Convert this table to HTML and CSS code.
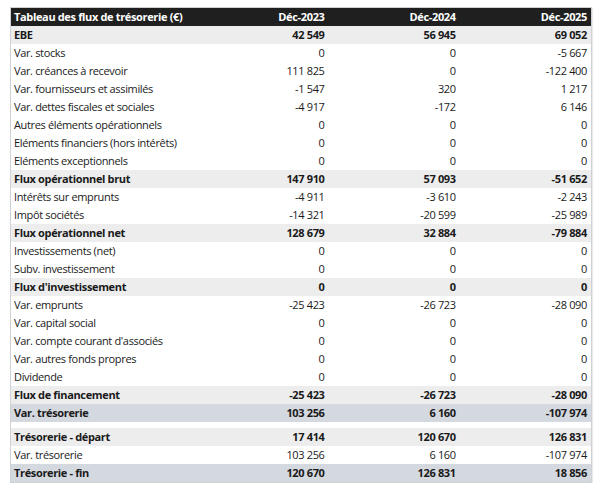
FILE: index.html
```html
<!DOCTYPE html>
<html lang="fr">
<head>
<meta charset="utf-8">
<link rel="stylesheet" href="styles.css">
</head>
<body>
<div class="frame">
<table class="cf">
<colgroup><col class="c-label"><col class="c-num"><col class="c-num"><col class="c-num"></colgroup>
<thead>
<tr class="head"><th>Tableau des flux de trésorerie (€)</th><th>Déc-2023</th><th>Déc-2024</th><th>Déc-2025</th></tr>
</thead>
<tbody>
<tr class="total"><td>EBE</td><td>42 549</td><td>56 945</td><td>69 052</td></tr>
<tr><td>Var. stocks</td><td>0</td><td>0</td><td>-5 667</td></tr>
<tr><td>Var. créances à recevoir</td><td>111 825</td><td>0</td><td>-122 400</td></tr>
<tr><td>Var. fournisseurs et assimilés</td><td>-1 547</td><td>320</td><td>1 217</td></tr>
<tr><td>Var. dettes fiscales et sociales</td><td>-4 917</td><td>-172</td><td>6 146</td></tr>
<tr><td>Autres éléments opérationnels</td><td>0</td><td>0</td><td>0</td></tr>
<tr><td>Eléments financiers (hors intérêts)</td><td>0</td><td>0</td><td>0</td></tr>
<tr><td>Eléments exceptionnels</td><td>0</td><td>0</td><td>0</td></tr>
<tr class="total"><td>Flux opérationnel brut</td><td>147 910</td><td>57 093</td><td>-51 652</td></tr>
<tr><td>Intérêts sur emprunts</td><td>-4 911</td><td>-3 610</td><td>-2 243</td></tr>
<tr><td>Impôt sociétés</td><td>-14 321</td><td>-20 599</td><td>-25 989</td></tr>
<tr class="total"><td>Flux opérationnel net</td><td>128 679</td><td>32 884</td><td>-79 884</td></tr>
<tr><td>Investissements (net)</td><td>0</td><td>0</td><td>0</td></tr>
<tr><td>Subv. investissement</td><td>0</td><td>0</td><td>0</td></tr>
<tr class="total"><td>Flux d'investissement</td><td>0</td><td>0</td><td>0</td></tr>
<tr><td>Var. emprunts</td><td>-25 423</td><td>-26 723</td><td>-28 090</td></tr>
<tr><td>Var. capital social</td><td>0</td><td>0</td><td>0</td></tr>
<tr><td>Var. compte courant d'associés</td><td>0</td><td>0</td><td>0</td></tr>
<tr><td>Var. autres fonds propres</td><td>0</td><td>0</td><td>0</td></tr>
<tr><td>Dividende</td><td>0</td><td>0</td><td>0</td></tr>
<tr class="total"><td>Flux de financement</td><td>-25 423</td><td>-26 723</td><td>-28 090</td></tr>
<tr class="grand"><td>Var. trésorerie</td><td>103 256</td><td>6 160</td><td>-107 974</td></tr>
<tr class="spacer"><td colspan="4"></td></tr>
<tr class="total"><td>Trésorerie - départ</td><td>17 414</td><td>120 670</td><td>126 831</td></tr>
<tr><td>Var. trésorerie</td><td>103 256</td><td>6 160</td><td>-107 974</td></tr>
<tr class="grand"><td>Trésorerie - fin</td><td>120 670</td><td>126 831</td><td>18 856</td></tr>
</tbody>
</table>
</div>
</body>
</html>
```

FILE: styles.css
```css
html, body {
  margin: 0;
  padding: 0;
  background: #ffffff;
}
body {
  padding: 7px 8px 0 10px;
  font-family: "Open Sans", "Noto Sans", sans-serif;
  font-size: 11px;
  letter-spacing: -0.35px;
  color: #1a1a1a;
}
.frame {
  border: 1px solid #cfd1d4;
  box-shadow: 1px 1px 1px rgba(0,0,0,0.08);
  width: 580px;
}
.cf {
  width: 100%;
  border-collapse: collapse;
  table-layout: fixed;
}
.c-label { width: 186px; }
.c-num { width: 131px; }
.cf th, .cf td {
  height: 18px;
  padding: 0 4px 0 3px;
  line-height: 18px;
  white-space: nowrap;
  text-align: right;
}
.cf th:first-child, .cf td:first-child {
  text-align: left;
}
.head th {
  background: #1f1f1f;
  color: #ffffff;
  font-weight: 700;
}
.total td {
  background: #ededee;
  font-weight: 700;
}
.grand td {
  background: #d4d8df;
  font-weight: 700;
}
.spacer td {
  height: 6px;
  line-height: 6px;
  background: #ffffff;
}
```
